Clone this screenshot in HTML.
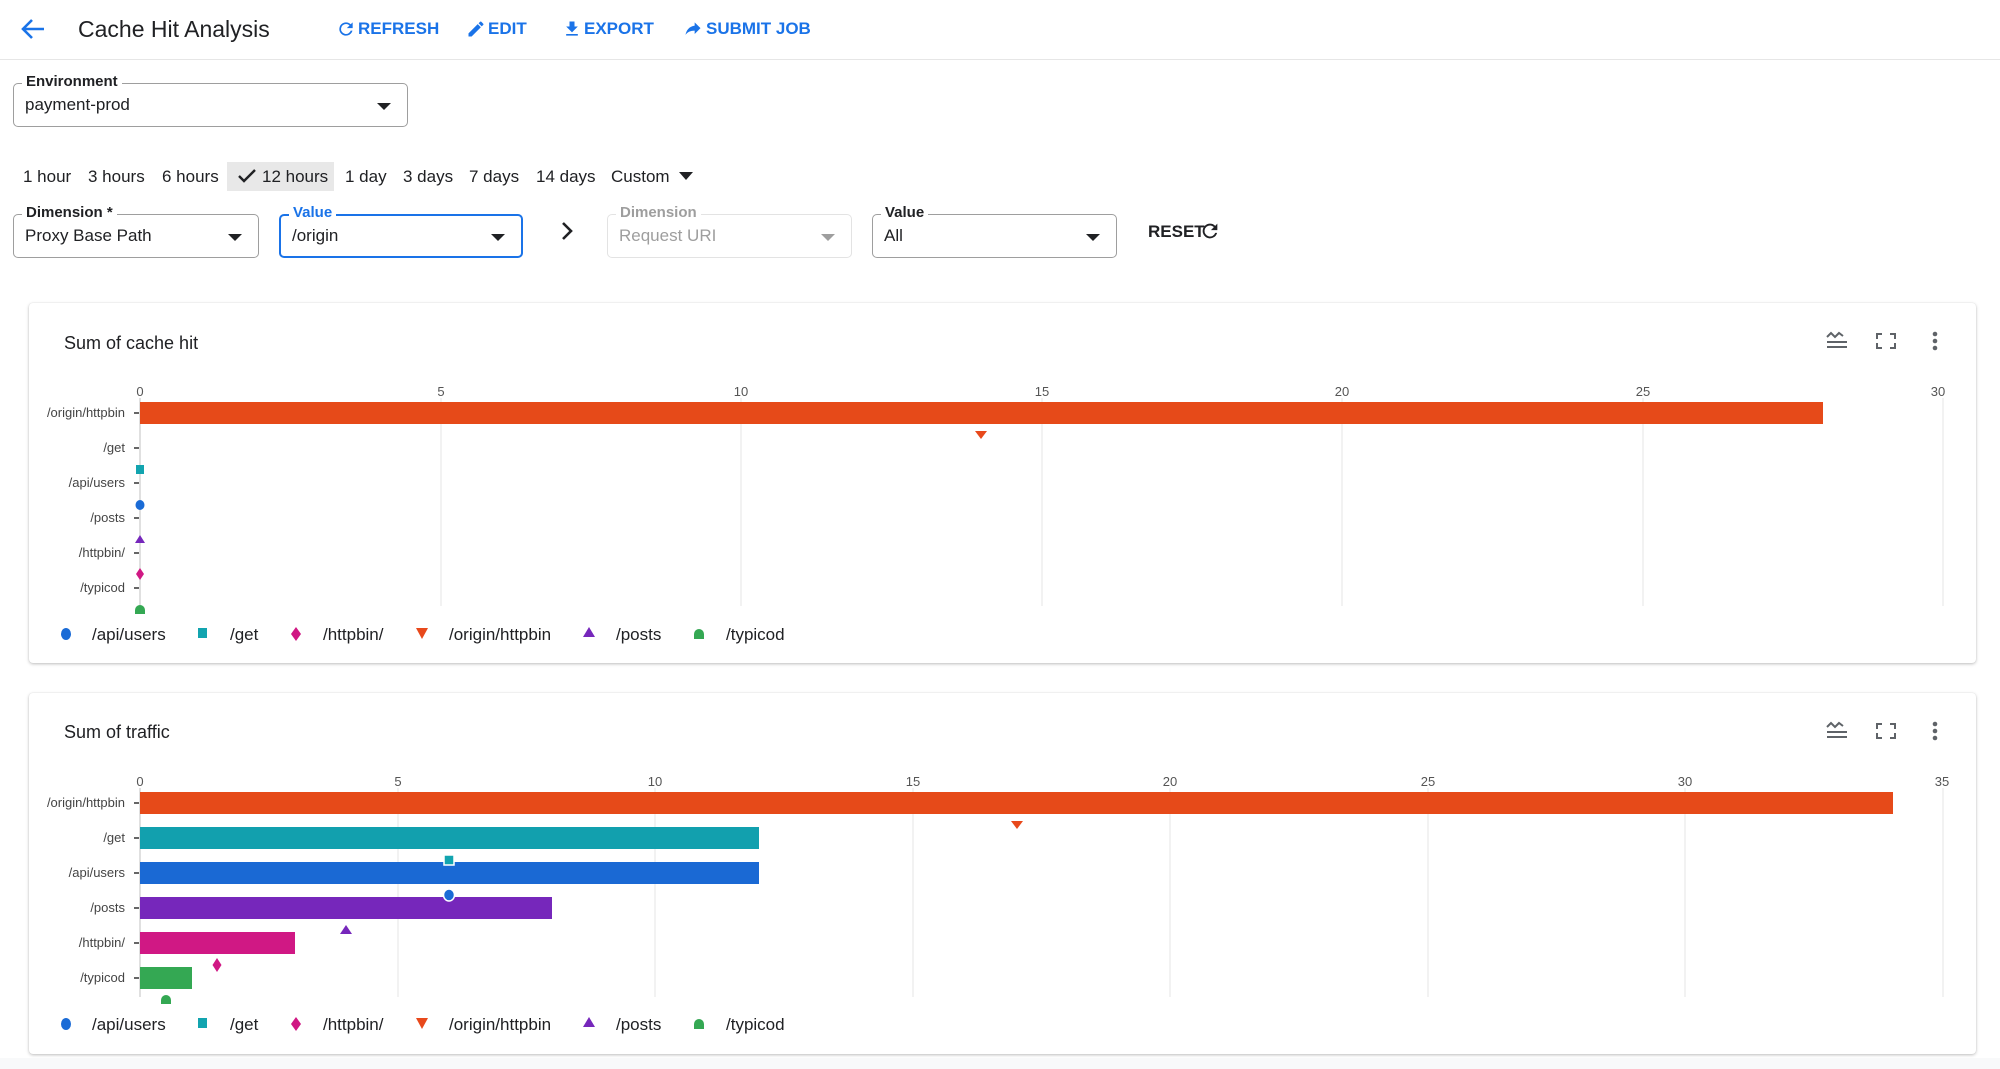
<!DOCTYPE html>
<html><head><meta charset="utf-8"><style>
*{box-sizing:border-box;margin:0;padding:0}
body{width:2000px;height:1069px;background:#fff;font-family:"Liberation Sans",sans-serif;position:relative;overflow:hidden;color:#202124}
.a{position:absolute;white-space:nowrap}
.hdr{position:absolute;left:0;top:0;width:2000px;height:60px;border-bottom:1px solid #e6e6e6}
.btn{position:absolute;top:19px;font-size:17px;font-weight:bold;color:#1a73e8;display:flex;align-items:center;gap:2px}
.field{position:absolute;border:1.5px solid #9e9e9e;border-radius:5px;height:44px}
.field .lab{position:absolute;top:-11px;left:8px;background:#fff;padding:0 4px;font-size:15px;font-weight:bold;color:#202124}
.field .val{position:absolute;left:11px;top:11px;font-size:17px}
.field .dd{position:absolute;right:16px;top:19px;width:0;height:0;border-left:7px solid transparent;border-right:7px solid transparent;border-top:7px solid #202124}
.chip{position:absolute;top:165px;font-size:17px;line-height:24px}
.card{position:absolute;left:29px;width:1947px;background:#fff;border-radius:4px;box-shadow:0 1px 3px rgba(0,0,0,.25),0 0 1px rgba(0,0,0,.1)}
</style></head><body>
<div class="hdr"></div>
<svg class="a" style="left:20px;top:17px" width="26" height="24" viewBox="0 0 26 24"><path d="M24 12H4M12 3L3 12l9 9" fill="none" stroke="#1a73e8" stroke-width="2.6"/></svg>
<div class="a" style="left:78px;top:16px;font-size:23px">Cache Hit Analysis</div>
<div class="btn" style="left:336px"><svg width="20" height="20" viewBox="0 0 24 24"><path d="M17.65 6.35A7.96 7.96 0 0 0 12 4a8 8 0 1 0 7.75 10h-2.08A6 6 0 1 1 12 6c1.66 0 3.14.69 4.22 1.78L13 11h7V4l-2.35 2.35z" fill="#1a73e8"/></svg>REFRESH</div>
<div class="btn" style="left:466px"><svg width="20" height="20" viewBox="0 0 24 24"><path d="M3 17.25V21h3.75L17.81 9.94l-3.75-3.75L3 17.25zM20.71 7.04a1 1 0 0 0 0-1.41l-2.34-2.34a1 1 0 0 0-1.41 0l-1.83 1.83 3.75 3.75 1.83-1.83z" fill="#1a73e8"/></svg>EDIT</div>
<div class="btn" style="left:562px"><svg width="20" height="20" viewBox="0 0 24 24"><path d="M19 9h-4V3H9v6H5l7 7 7-7zM5 18v2h14v-2H5z" fill="#1a73e8"/></svg>EXPORT</div>
<div class="btn" style="left:682px"><svg width="22" height="20" viewBox="0 0 24 24"><path d="M14 8V4l7 7-7 7v-4.1c-5 0-8.5 1.6-11 5.1 1-5 4-10 11-11z" fill="#1a73e8"/></svg>SUBMIT JOB</div>

<div class="field" style="left:13px;top:83px;width:395px"><span class="lab">Environment</span><span class="val">payment-prod</span><span class="dd"></span></div>

<div class="a" style="left:227px;top:162px;width:107px;height:29px;background:#e8e8e8"></div>
<div class="chip" style="left:23px">1 hour</div>
<div class="chip" style="left:88px">3 hours</div>
<div class="chip" style="left:162px">6 hours</div>
<svg class="a" style="left:237px;top:167px" width="20" height="18" viewBox="0 0 20 18"><path d="M2 9l5 5L18 3" fill="none" stroke="#202124" stroke-width="2.4"/></svg>
<div class="chip" style="left:262px">12 hours</div>
<div class="chip" style="left:345px">1 day</div>
<div class="chip" style="left:403px">3 days</div>
<div class="chip" style="left:469px">7 days</div>
<div class="chip" style="left:536px">14 days</div>
<div class="chip" style="left:611px">Custom</div>
<div class="a" style="left:679px;top:172px;border-left:7px solid transparent;border-right:7px solid transparent;border-top:8px solid #202124"></div>

<div class="field" style="left:13px;top:214px;width:246px"><span class="lab">Dimension *</span><span class="val">Proxy Base Path</span><span class="dd"></span></div>
<div class="field" style="left:279px;top:214px;width:244px;border:2.5px solid #1a73e8"><span class="lab" style="color:#1a73e8;top:-12px">Value</span><span class="val" style="top:10px">/origin</span><span class="dd" style="top:18px"></span></div>
<svg class="a" style="left:559px;top:221px" width="16" height="20" viewBox="0 0 16 20"><path d="M4 2l8 8-8 8" fill="none" stroke="#202124" stroke-width="2.6"/></svg>
<div class="field" style="left:607px;top:214px;width:245px;border-color:#e3e3e3"><span class="lab" style="color:#9e9e9e">Dimension</span><span class="val" style="color:#9e9e9e">Request URI</span><span class="dd" style="border-top-color:#9e9e9e"></span></div>
<div class="field" style="left:872px;top:214px;width:245px"><span class="lab">Value</span><span class="val">All</span><span class="dd"></span></div>
<div class="a" style="left:1148px;top:222px;font-size:17px;font-weight:bold">RESET</div>
<svg class="a" style="left:1199px;top:220px" width="22" height="22" viewBox="0 0 24 24"><path d="M17.65 6.35A7.96 7.96 0 0 0 12 4a8 8 0 1 0 7.75 10h-2.08A6 6 0 1 1 12 6c1.66 0 3.14.69 4.22 1.78L13 11h7V4l-2.35 2.35z" fill="#202124"/></svg>

<div class="card" style="top:303px;height:360px"></div>
<div class="card" style="top:693px;height:361px"></div>
<div class="a" style="left:0;top:1058px;width:2000px;height:11px;background:#f8f9fa"></div>

<svg class="a" style="left:0;top:0" width="2000" height="1069" font-family="Liberation Sans, sans-serif">
<defs>
<g id="icons" fill="#5f6368">
 <path d="M-10-4l4-4 4 4 4-4 4 3" fill="none" stroke="#5f6368" stroke-width="2"/>
 <rect x="-10" y="0" width="20" height="2"/><rect x="-10" y="5" width="20" height="2"/>
 <path d="M39-8h6v2h-4v4h-2zM53-8h6v6h-2v-4h-4zM39 2h2v4h4v2h-6zM57 2h2v6h-6v-2h4z"/>
 <circle cx="98" cy="-7" r="2.3"/><circle cx="98" cy="0" r="2.3"/><circle cx="98" cy="7" r="2.3"/>
</g>
<g id="legend" font-size="17" fill="#202124">
 <ellipse cx="66" cy="0" rx="5" ry="6" fill="#1a6bd6"/><text x="92" y="6">/api/users</text>
 <rect x="198" y="-6" width="9" height="10" fill="#12a4af"/><text x="230" y="6">/get</text>
 <path d="M296-7l5 7-5 7-5-7z" fill="#d01884"/><text x="323" y="6">/httpbin/</text>
 <path d="M416-6h12l-6 11z" fill="#e8491b"/><text x="449" y="6">/origin/httpbin</text>
 <path d="M589-7l6 10h-12z" fill="#7627bb"/><text x="616" y="6">/posts</text>
 <path d="M694 5v-5a5 5 0 0 1 10 0v5z" fill="#34a853"/><text x="726" y="6">/typicod</text>
</g>
<g id="rows" font-size="13" fill="#444" text-anchor="end">
 <text x="125" y="0">/origin/httpbin</text><text x="125" y="35">/get</text><text x="125" y="70">/api/users</text><text x="125" y="105">/posts</text><text x="125" y="140">/httpbin/</text><text x="125" y="175">/typicod</text>
 <g stroke="#333" stroke-width="1.5"><path d="M134-4h5M134 31h5M134 66h5M134 101h5M134 136h5M134 171h5"/></g>
</g>
</defs>
<!-- card 1 -->
<text x="64" y="349" font-size="18" fill="#202124">Sum of cache hit</text>
<use href="#icons" x="1837" y="341"/>
<g stroke="#e8e8e8" stroke-width="1.2">
<line x1="441" y1="398" x2="441" y2="606"/><line x1="741" y1="398" x2="741" y2="606"/><line x1="1042" y1="398" x2="1042" y2="606"/><line x1="1342" y1="398" x2="1342" y2="606"/><line x1="1643" y1="398" x2="1643" y2="606"/><line x1="1943" y1="398" x2="1943" y2="606"/></g>
<line x1="140" y1="398" x2="140" y2="606" stroke="#ccc" stroke-width="1.2"/>
<g font-size="13" fill="#555" text-anchor="middle"><text x="140" y="396">0</text><text x="441" y="396">5</text><text x="741" y="396">10</text><text x="1042" y="396">15</text><text x="1342" y="396">20</text><text x="1643" y="396">25</text><text x="1938" y="396">30</text></g>
<use href="#rows" x="0" y="417"/>
<rect x="140" y="402" width="1683" height="22" fill="#e64a19"/>
<path d="M975 431h12l-6 8z" fill="#e8491b"/>
<rect x="136" y="465" width="8" height="9" fill="#12a4af"/>
<ellipse cx="140" cy="505" rx="4.5" ry="5" fill="#1a6bd6"/>
<path d="M140 535l5 8h-10z" fill="#7627bb"/>
<path d="M140 568l4 6-4 6-4-6z" fill="#d01884"/>
<path d="M135 614v-4a5 5 0 0 1 10 0v4z" fill="#34a853"/>
<use href="#legend" x="0" y="634"/>
<!-- card 2 -->
<text x="64" y="738" font-size="18" fill="#202124">Sum of traffic</text>
<use href="#icons" x="1837" y="731"/>
<g stroke="#e8e8e8" stroke-width="1.2">
<line x1="398" y1="788" x2="398" y2="997"/><line x1="655" y1="788" x2="655" y2="997"/><line x1="913" y1="788" x2="913" y2="997"/><line x1="1170" y1="788" x2="1170" y2="997"/><line x1="1428" y1="788" x2="1428" y2="997"/><line x1="1685" y1="788" x2="1685" y2="997"/><line x1="1943" y1="788" x2="1943" y2="997"/></g>
<line x1="140" y1="788" x2="140" y2="997" stroke="#ccc" stroke-width="1.2"/>
<g font-size="13" fill="#555" text-anchor="middle"><text x="140" y="786">0</text><text x="398" y="786">5</text><text x="655" y="786">10</text><text x="913" y="786">15</text><text x="1170" y="786">20</text><text x="1428" y="786">25</text><text x="1685" y="786">30</text><text x="1942" y="786">35</text></g>
<use href="#rows" x="0" y="807"/>
<rect x="140" y="792" width="1753" height="22" fill="#e64a19"/>
<rect x="140" y="827" width="619" height="22" fill="#12a0ae"/>
<rect x="140" y="862" width="619" height="22" fill="#1a69d4"/>
<rect x="140" y="897" width="412" height="22" fill="#7627bb"/>
<rect x="140" y="932" width="155" height="22" fill="#d01884"/>
<rect x="140" y="967" width="52" height="22" fill="#34a853"/>
<path d="M1011 821h12l-6 8z" fill="#e8491b"/>
<rect x="444" y="855" width="10" height="10" fill="#12a4af" stroke="#fff" stroke-width="1.5"/>
<ellipse cx="449" cy="895" rx="5.5" ry="6" fill="#1a6bd6" stroke="#fff" stroke-width="1.5"/>
<path d="M346 925l6 9h-12z" fill="#7627bb"/>
<path d="M217 958l4.5 7-4.5 7-4.5-7z" fill="#d01884"/>
<path d="M161 1004v-4a5 5 0 0 1 10 0v4z" fill="#34a853"/>
<use href="#legend" x="0" y="1024"/>
</svg>
</body></html>
